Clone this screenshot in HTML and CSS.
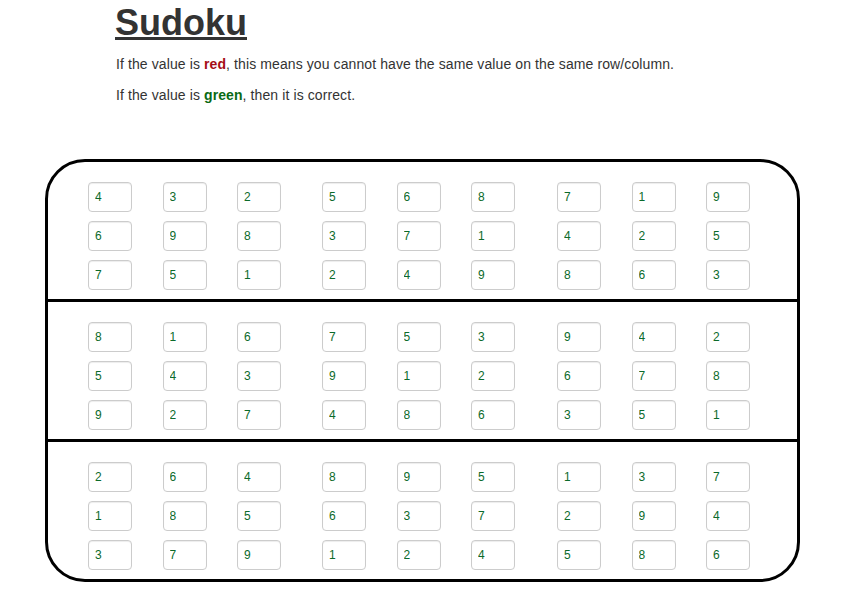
FILE: index.html
```html
<!DOCTYPE html>
<html>
<head>
<meta charset="utf-8">
<title>Sudoku</title>
<link rel="stylesheet" href="styles.css">
</head>
<body>
<div class="intro">
  <h1 class="title">Sudoku</h1>
  <p class="note">If the value is <b class="bad">red</b>, this means you cannot have the same value on the same row/column.</p>
  <p class="note">If the value is <b class="good">green</b>, then it is correct.</p>
</div>
<div class="board">
  <div class="band">
    <div class="row">
      <div class="group"><input class="cell" value="4"><input class="cell" value="3"><input class="cell" value="2"></div>
      <div class="group"><input class="cell" value="5"><input class="cell" value="6"><input class="cell" value="8"></div>
      <div class="group"><input class="cell" value="7"><input class="cell" value="1"><input class="cell" value="9"></div>
    </div>
    <div class="row">
      <div class="group"><input class="cell" value="6"><input class="cell" value="9"><input class="cell" value="8"></div>
      <div class="group"><input class="cell" value="3"><input class="cell" value="7"><input class="cell" value="1"></div>
      <div class="group"><input class="cell" value="4"><input class="cell" value="2"><input class="cell" value="5"></div>
    </div>
    <div class="row">
      <div class="group"><input class="cell" value="7"><input class="cell" value="5"><input class="cell" value="1"></div>
      <div class="group"><input class="cell" value="2"><input class="cell" value="4"><input class="cell" value="9"></div>
      <div class="group"><input class="cell" value="8"><input class="cell" value="6"><input class="cell" value="3"></div>
    </div>
  </div>
  <div class="band">
    <div class="row">
      <div class="group"><input class="cell" value="8"><input class="cell" value="1"><input class="cell" value="6"></div>
      <div class="group"><input class="cell" value="7"><input class="cell" value="5"><input class="cell" value="3"></div>
      <div class="group"><input class="cell" value="9"><input class="cell" value="4"><input class="cell" value="2"></div>
    </div>
    <div class="row">
      <div class="group"><input class="cell" value="5"><input class="cell" value="4"><input class="cell" value="3"></div>
      <div class="group"><input class="cell" value="9"><input class="cell" value="1"><input class="cell" value="2"></div>
      <div class="group"><input class="cell" value="6"><input class="cell" value="7"><input class="cell" value="8"></div>
    </div>
    <div class="row">
      <div class="group"><input class="cell" value="9"><input class="cell" value="2"><input class="cell" value="7"></div>
      <div class="group"><input class="cell" value="4"><input class="cell" value="8"><input class="cell" value="6"></div>
      <div class="group"><input class="cell" value="3"><input class="cell" value="5"><input class="cell" value="1"></div>
    </div>
  </div>
  <div class="band">
    <div class="row">
      <div class="group"><input class="cell" value="2"><input class="cell" value="6"><input class="cell" value="4"></div>
      <div class="group"><input class="cell" value="8"><input class="cell" value="9"><input class="cell" value="5"></div>
      <div class="group"><input class="cell" value="1"><input class="cell" value="3"><input class="cell" value="7"></div>
    </div>
    <div class="row">
      <div class="group"><input class="cell" value="1"><input class="cell" value="8"><input class="cell" value="5"></div>
      <div class="group"><input class="cell" value="6"><input class="cell" value="3"><input class="cell" value="7"></div>
      <div class="group"><input class="cell" value="2"><input class="cell" value="9"><input class="cell" value="4"></div>
    </div>
    <div class="row">
      <div class="group"><input class="cell" value="3"><input class="cell" value="7"><input class="cell" value="9"></div>
      <div class="group"><input class="cell" value="1"><input class="cell" value="2"><input class="cell" value="4"></div>
      <div class="group"><input class="cell" value="5"><input class="cell" value="8"><input class="cell" value="6"></div>
    </div>
  </div>
</div>
</body>
</html>
```

FILE: styles.css
```css
html, body {
  margin: 0;
  padding: 0;
  background: #fff;
}
body {
  font-family: "Liberation Sans", Arial, sans-serif;
  color: #333;
  font-size: 14px;
}
.intro {
  padding: 3px 0 0 115px;
}
.title {
  margin: 0 0 11px 0;
  font-size: 36px;
  line-height: 40px;
  font-weight: bold;
  text-decoration: underline;
  color: #333;
}
.note {
  margin: 0 0 10px 1px;
  line-height: 21px;
  letter-spacing: 0.1px;
}
.bad {
  color: #a50d16;
}
.good {
  color: #0a6a14;
}
.board {
  margin: 53px 0 0 45px;
  width: 749px;
  border: 3px solid #000;
  border-radius: 40px;
}
.band {
  padding: 20px 0 9px 40px;
  display: flex;
  flex-direction: column;
  gap: 9px;
}
.band + .band {
  border-top: 3px solid #000;
}
.row {
  display: flex;
  gap: 41px;
}
.group {
  display: flex;
  gap: 30.5px;
}
.group + .group + .group {
  margin-left: 1px;
}
.cell {
  box-sizing: border-box;
  width: 44px;
  height: 30px;
  margin: 0;
  padding: 0 6px;
  border: 1px solid #ccc;
  border-radius: 4px;
  box-shadow: inset 0 1px 1px rgba(0, 0, 0, 0.075);
  font-family: "Liberation Sans", Arial, sans-serif;
  font-size: 12px;
  color: #0b6a2a;
  background: #fff;
  outline: none;
}
```
